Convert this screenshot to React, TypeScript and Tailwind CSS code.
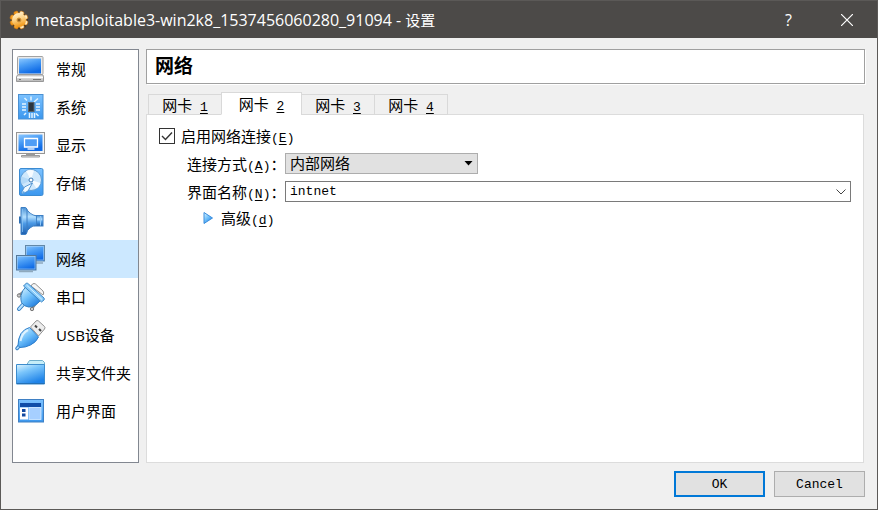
import React, { useState } from "react";

interface IconProps {
  children: React.ReactNode;
}

const Icon = ({ children }: IconProps) => (
  <svg viewBox="0 0 32 32" className="w-8 h-8 shrink-0" aria-hidden="true">
    {children}
  </svg>
);

// gradients shared by all of the icons
const Gradients = () => (
  <svg className="absolute w-0 h-0" aria-hidden="true">
    <defs>
      <linearGradient id="screen" x1="0" y1="0" x2="0.4" y2="1">
        <stop offset="0" stopColor="#8cc8ff" />
        <stop offset="0.45" stopColor="#4a9df5" />
        <stop offset="1" stopColor="#0f6be6" />
      </linearGradient>
      <linearGradient id="sky" x1="0" y1="0" x2="0" y2="1">
        <stop offset="0" stopColor="#7cc2ff" />
        <stop offset="1" stopColor="#3b97ee" />
      </linearGradient>
      <linearGradient id="folder" x1="0" y1="0" x2="0.5" y2="1">
        <stop offset="0" stopColor="#e0f6ff" />
        <stop offset="0.4" stopColor="#7cc6fb" />
        <stop offset="1" stopColor="#1f83e8" />
      </linearGradient>
      <linearGradient id="cone" x1="0" y1="0" x2="0" y2="1">
        <stop offset="0" stopColor="#4a90d4" />
        <stop offset="0.35" stopColor="#b4e0ff" />
        <stop offset="0.6" stopColor="#4c9ae6" />
        <stop offset="1" stopColor="#1d5fae" />
      </linearGradient>
      <linearGradient id="plug" x1="0.1" y1="0" x2="0.8" y2="1">
        <stop offset="0" stopColor="#d4f1ff" />
        <stop offset="0.5" stopColor="#6cbefa" />
        <stop offset="1" stopColor="#1b78dc" />
      </linearGradient>
      <linearGradient id="metal" x1="0" y1="0" x2="0" y2="1">
        <stop offset="0" stopColor="#fafafa" />
        <stop offset="1" stopColor="#b4b4b4" />
      </linearGradient>
      <linearGradient id="gold" x1="0" y1="0" x2="0.3" y2="1">
        <stop offset="0" stopColor="#fff6dc" />
        <stop offset="0.5" stopColor="#fdd489" />
        <stop offset="1" stopColor="#f29a1c" />
      </linearGradient>
    </defs>
  </svg>
);

const GeneralIcon = () => (
  <Icon>
    <rect x="3.5" y="3.5" width="25.5" height="18" rx="1" fill="#e9e9e9" stroke="#a2a2a2" />
    <rect x="5" y="5.500" width="22" height="15" fill="url(#screen)" />
    <path d="M3.500 22h25.500l.5 2v4.500h-27V24z" fill="url(#metal)" stroke="#989898" />
    <path d="M3 24.500h26" stroke="#fff" />
    <path d="M5 26.500h2M19 26.500h8" stroke="#777" />
  </Icon>
);

const SystemIcon = () => (
  <Icon>
    <rect x="4.500" y="3.500" width="24.500" height="24.500" fill="url(#sky)" stroke="#4a90d2" />
    <g stroke="#e2f4ff" strokeWidth="1.500">
      <path d="M17 5.500v4M10.500 7l2.500 2.500M24 7.500l-4 3.500M8 13h4M8 16h4M8 19h4M22 13h4M22 16h4M22 19h4M12 22l-2 2M15.500 22v5M18 22v5M20.500 22v5M24.500 25l-2.500-2.500" />
    </g>
    <rect x="14.500" y="11.500" width="5.500" height="9" fill="#2b3640" stroke="#56646f" />
  </Icon>
);

const DisplayIcon = () => (
  <Icon>
    <rect x="2.500" y="3.500" width="28" height="21" fill="#f4f4f4" stroke="#959595" />
    <rect x="4.500" y="5.500" width="24" height="16.500" fill="url(#screen)" />
    <path d="M10.500 9.500h13v8.500h-13z" fill="#4f9df5" stroke="#fff" strokeWidth="1.300" />
    <path d="M13.500 20h7" stroke="#fff" strokeWidth="1.300" />
    <path d="M12 25h9v1.500h-9z" fill="#999" />
    <path d="M7.500 26.500h18v1.500h-18z" fill="#ddd" stroke="#999" />
  </Icon>
);

const StorageIcon = () => (
  <Icon>
    <rect x="5.500" y="1.500" width="23.500" height="27" rx="1.500" fill="url(#sky)" stroke="#3b8bd2" />
    <circle cx="17" cy="13" r="10.500" fill="#cfe8fc" stroke="#5e9dd6" />
    <path d="M17 13L12 4a10 10 0 0 1 8-.5zM17 13l9.500 3a10 10 0 0 1-4 5.500z" fill="#fff" opacity="0.800" />
    <path d="M17 13L7.500 9.500A10 10 0 0 0 8 17.500z" fill="#b5daf8" />
    <circle cx="17" cy="13" r="2" fill="#fff" stroke="#3978b5" />
    <path d="M18.500 16l-4.500 8-5.500 3-1-1.500 3-5.500z" fill="#f2faff" stroke="#4c8fce" strokeWidth="0.900" />
    <circle cx="9.500" cy="25.500" r="1.200" fill="#5fa7e6" />
  </Icon>
);

const AudioIcon = () => (
  <Icon>
    <rect x="5" y="11.500" width="3" height="7" fill="#2d6eb2" />
    <rect x="20" y="10.500" width="9" height="10.500" fill="url(#cone)" stroke="#3c7fc4" />
    <path d="M12 3c2 4 5.500 7 10.500 8v9c-5 1-8.500 4-10.500 8z" fill="url(#cone)" stroke="#3c7fc4" strokeWidth="0.900" />
    <path d="M7 2.500h4.500q1 0 1.500 2.500v22q-.5 2.500-1.500 2.500H7z" fill="url(#cone)" stroke="#3c7fc4" />
    <path d="M8.500 4v23" stroke="#8cc6f5" opacity="0.700" />
    <path d="M26.500 11v9.500" stroke="#90c8f8" />
  </Icon>
);

const NetworkIcon = () => (
  <Icon>
    <rect x="11.500" y="2.500" width="19" height="15.500" fill="url(#screen)" stroke="#6288a8" />
    <path d="M22 20h7" stroke="#8fa9bd" strokeWidth="1.500" />
    <rect x="12.500" y="3.500" width="17" height="13.500" fill="none" stroke="#a7d1f5" strokeWidth="0.600" />
    <rect x="2.500" y="12.500" width="19.500" height="14.500" fill="url(#screen)" stroke="#54799b" />
    <rect x="3.500" y="13.500" width="17.500" height="12.500" fill="none" stroke="#a7d1f5" strokeWidth="0.600" />
    <path d="M5 28.500h14" stroke="#8fa9bd" strokeWidth="1.500" />
  </Icon>
);

const SerialIcon = () => (
  <Icon>
    <path d="M17 5l1.500-2q1.500-1 3 0l7.500 7q1.500 2 0 4z" fill="#f6f6f6" stroke="#909090" />
    <path d="M9 11l-4 3.500M21 23.500l-3 4" stroke="#8a8a8a" strokeWidth="2.500" />
    <circle cx="5" cy="14.500" r="1.700" fill="#ccc" stroke="#777" />
    <circle cx="18" cy="28" r="1.700" fill="#ccc" stroke="#777" />
    <path d="M9.500 23L5 28" stroke="#347fc4" strokeWidth="4" strokeLinecap="round" />
    <path d="M9.500 23L5 28" stroke="#b9e2ff" strokeWidth="2" strokeLinecap="round" />
    <path d="M12 5.500q-4 4-5 9-.5 4 .500 7 2.500 4 7 4.500 6 .500 11.500-6z" fill="url(#plug)" stroke="#3780c0" />
    <path d="M9.500 5l3-3q1 0 2 1L30 17q.5 1 0 2l-2.500 2z" fill="#8accfa" stroke="#3c86c6" />
    <path d="M12.500 4L28 18.500" stroke="#d8f1ff" />
  </Icon>
);

const UsbIcon = () => (
  <Icon>
    <path d="M16.500 8l5.500-6q1-1 2.500 0l6 5.500q1 1 0 2.500l-6 7z" fill="#ededed" stroke="#909090" />
    <path d="M21 6.500l2 2M25 10l2 2" stroke="#444" strokeWidth="2" />
    <path d="M6 26l-3 3.500" stroke="#347fc4" strokeWidth="3.500" strokeLinecap="round" />
    <path d="M6 26l-3 3.500" stroke="#b9e2ff" strokeWidth="1.500" strokeLinecap="round" />
    <path d="M15.500 8.500l9 9.500q-2 5-8 8-5 2.500-10.500 2.500l-2-2q0-7 3-12 3-4.500 8.500-6z" fill="url(#plug)" stroke="#2f7fcb" />
    <path d="M14 11q-6 3-7.500 11" fill="none" stroke="#f0faff" strokeWidth="2" opacity="0.800" />
  </Icon>
);

const FolderIcon = () => (
  <Icon>
    <path d="M12.500 8l3-4.500h13l2 2V10h-18z" fill="#c5edf8" stroke="#6faecb" />
    <path d="M2.500 7.500h28V27h-28z" fill="url(#folder)" stroke="#3d8ccd" />
    <path d="M3 26.500h27.500" stroke="#2470b5" />
  </Icon>
);

const InterfaceIcon = () => (
  <Icon>
    <rect x="4.500" y="4.500" width="25" height="22.500" fill="url(#sky)" stroke="#3f80c4" />
    <rect x="6" y="8" width="21" height="4" fill="#0f4da8" />
    <rect x="6" y="12.500" width="8" height="12" fill="#fff" />
    <path d="M8 14h3.500v3H8zM8 18.500h3.500v3H8z" fill="#1149a0" />
    <rect x="15" y="12.500" width="12" height="12" fill="#a6cfff" stroke="#d8ebff" strokeWidth="0.800" />
  </Icon>
);

const GearIcon = () => (
  <svg viewBox="0 0 20 20" className="w-5 h-5 shrink-0" aria-hidden="true">
    <circle cx="10.500" cy="11" r="8.500" fill="#2e2010" opacity="0.600" />
    {[0, 45, 90, 135].map((angle) => (
      <rect
        key={angle}
        x="7.800"
        y="0.800"
        width="4.400"
        height="18.400"
        rx="1.500"
        fill="url(#gold)"
        stroke="#c9750f"
        strokeWidth="0.600"
        transform={`rotate(${angle + 22} 10 10)`}
      />
    ))}
    <circle cx="10" cy="10" r="7" fill="url(#gold)" />
    <circle cx="10" cy="10" r="2" fill="#8a5a1c" stroke="#d99a3c" />
  </svg>
);

const sections = [
  { title: "常规", icon: <GeneralIcon /> },
  { title: "系统", icon: <SystemIcon /> },
  { title: "显示", icon: <DisplayIcon /> },
  { title: "存储", icon: <StorageIcon /> },
  { title: "声音", icon: <AudioIcon /> },
  { title: "网络", icon: <NetworkIcon /> },
  { title: "串口", icon: <SerialIcon /> },
  { title: "USB设备", icon: <UsbIcon /> },
  { title: "共享文件夹", icon: <FolderIcon /> },
  { title: "用户界面", icon: <InterfaceIcon /> },
];

// latin letters are set in a monospaced face next to the chinese text
const Mono = ({ children }: { children: React.ReactNode }) => (
  <span className="font-['Liberation_Mono','Noto_Sans_CJK_SC',monospace] text-[13px] leading-none">
    {children}
  </span>
);

const Hotkey = ({ letter }: { letter: string }) => (
  <Mono>
    (<u className="underline-offset-2">{letter}</u>)
  </Mono>
);

const TitleBar = () => (
  <header className="flex items-center h-[37px] pl-2 bg-[#4c4a48] text-white">
    <GearIcon />
    <h1 className="flex-1 pl-1.5 text-base truncate">
      metasploitable3-win2k8_1537456060280_91094 - <span className="text-[15px]">设置</span>
    </h1>
    <button type="button" aria-label="Help" className="w-[57px] h-full text-base">
      ?
    </button>
    <button
      type="button"
      aria-label="Close"
      className="flex items-center justify-center w-[60px] h-full"
    >
      <svg viewBox="0 0 12 12" className="w-3 h-3" stroke="#fff" strokeWidth="1.200">
        <path d="M0 0l12 12M12 0L0 12" />
      </svg>
    </button>
  </header>
);

const Sidebar = () => {
  const [selected, setSelected] = useState("网络");

  return (
    <nav className="w-[127px] shrink-0 bg-white border border-[#828790]">
      {sections.map((section) => (
        <button
          key={section.title}
          type="button"
          onClick={() => setSelected(section.title)}
          className={`flex items-center gap-2.5 w-full h-[38px] pl-px text-[15px] whitespace-nowrap ${
            selected === section.title ? "bg-[#cce8ff]" : ""
          }`}
        >
          {section.icon}
          {section.title}
        </button>
      ))}
    </nav>
  );
};

const AdapterTabs = () => {
  const [active, setActive] = useState(2);

  return (
    <div role="tablist" className="flex items-end h-[23px] pl-0.5 -mb-px z-10">
      {[1, 2, 3, 4].map((n) => (
        <button
          key={n}
          type="button"
          role="tab"
          aria-selected={active === n}
          onClick={() => setActive(n)}
          className={`flex-none border border-[#d9d9d9] -mr-px whitespace-nowrap leading-[18px] ${
            active === n
              ? "w-[81px] h-[23px] bg-white border-b-white"
              : "w-[74px] h-[21px] bg-[#f0f0f0]"
          }`}
        >
          网卡
          <Mono>
            {" "}
            <u className="underline-offset-2">{n}</u>
          </Mono>
        </button>
      ))}
    </div>
  );
};

const AdapterForm = () => {
  const [enabled, setEnabled] = useState(true);
  const [name, setName] = useState("intnet");

  return (
    <div
      role="tabpanel"
      className="flex flex-col flex-1 gap-[7px] px-3 pt-[11px] mr-px bg-white border border-[#dcdcdc] leading-5"
    >
      {/* enable */}
      <label className="flex items-center gap-1.5 h-5">
        <span className="grid">
          <input
            type="checkbox"
            checked={enabled}
            onChange={(e) => setEnabled(e.target.checked)}
            className="col-start-1 row-start-1 w-4 h-4 bg-white border border-[#333] appearance-none"
          />
          {enabled && (
            <svg
              viewBox="0 0 16 16"
              className="col-start-1 row-start-1 w-4 h-4 pointer-events-none"
              fill="none"
              stroke="#333"
              strokeWidth="1.400"
            >
              <path d="M3 8l3.500 3.500L13 4.500" />
            </svg>
          )}
        </span>
        <span>
          启用网络连接
          <Hotkey letter="E" />
        </span>
      </label>
      {/* attached to */}
      <div className="flex items-center h-[21px] pl-7">
        <label htmlFor="attachment" className="w-[98px] whitespace-nowrap">
          连接方式
          <Hotkey letter="A" />：
        </label>
        <div className="grid w-[193px]">
          <select
            id="attachment"
            defaultValue="内部网络"
            className="col-start-1 row-start-1 h-[21px] px-1 bg-[#e1e1e1] border border-[#adadad] leading-[19px] appearance-none"
          >
            <option>内部网络</option>
          </select>
          <svg
            viewBox="0 0 9 5"
            className="col-start-1 row-start-1 place-self-center justify-self-end w-[9px] h-[5px] mr-[5px] pointer-events-none"
          >
            <path d="M.5 0h8L4.500 4.500z" />
          </svg>
        </div>
      </div>
      {/* network name */}
      <div className="flex items-center h-[21px] pl-7">
        <label htmlFor="network-name" className="w-[98px] whitespace-nowrap">
          界面名称
          <Hotkey letter="N" />：
        </label>
        <div className="flex flex-1 items-center h-[21px] border border-[#7a7a7a]">
          <input
            id="network-name"
            type="text"
            value={name}
            onChange={(e) => setName(e.target.value)}
            className="flex-1 min-w-0 px-1 font-['Liberation_Mono',monospace] text-[13px] outline-none"
          />
          <button
            type="button"
            aria-label="Show names"
            className="flex items-center justify-center w-[18px] h-full"
          >
            <svg viewBox="0 0 10 6" className="w-2.5 h-1.5" fill="none" stroke="#444">
              <path d="M.5.5L5 5 9.500.5" />
            </svg>
          </button>
        </div>
      </div>
      {/* advanced */}
      <button type="button" className="flex items-center gap-2 h-[18px] pl-11 self-start">
        <svg viewBox="0 0 10 12" className="w-2.5 h-3">
          <path d="M1 .5L9.500 6 1 11.500z" fill="url(#plug)" stroke="#3a8ddd" />
        </svg>
        <span>
          高级
          <Hotkey letter="d" />
        </span>
      </button>
    </div>
  );
};

const Footer = () => (
  <footer className="flex justify-end gap-[9px] pt-2 pb-3 font-['Liberation_Mono',monospace] text-[13px]">
    <button type="button" className="w-[91px] h-[26px] pt-0.5 bg-[#e1e1e1] border-2 border-[#0078d7]">
      OK
    </button>
    <button type="button" className="w-[91px] h-[26px] pt-0.5 bg-[#e1e1e1] border border-[#adadad]">
      Cancel
    </button>
  </footer>
);

const App = () => {
  return (
    <div className="flex flex-col min-h-screen bg-[#f0f0f0] border border-[#5b5957] text-black text-[15px] font-['Open_Sans','Noto_Sans_CJK_SC',sans-serif]">
      <Gradients />
      <TitleBar />
      <div className="flex flex-col flex-1 pt-[11px] pl-[11px] pr-3">
        <div className="flex flex-1 gap-[7px]">
          <Sidebar />
          <main className="flex flex-col flex-1 min-w-0">
            <h2 className="flex items-center h-[35px] px-2 mb-2 bg-white border border-[#a0a0a0] shadow-[1px_1px_0_#fff] text-[19px] font-bold">
              网络
            </h2>
            <AdapterTabs />
            <AdapterForm />
          </main>
        </div>
        <Footer />
      </div>
    </div>
  );
};

export default App;
